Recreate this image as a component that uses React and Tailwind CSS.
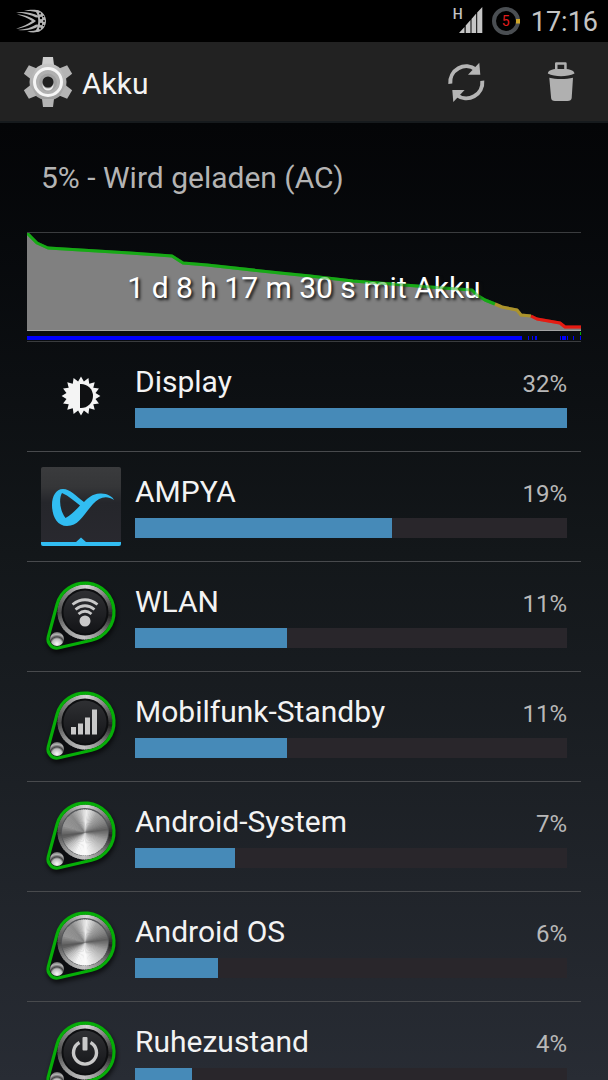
import { useId } from "react";

const GREEN = "#06ae08";
const LEVEL_GREEN = "0,0 4,4 10,10 21,15 70,18 103,20 145,23 156,30 180,32 253,40 283,43 326,48 403,54 445,57 450,62 458,67 468,71";
const LEVEL_YELLOW = "468,71 475,74 490,77 494,82 504,83";
const LEVEL_RED = "504,83 510,86 533,90 538,94 554,94";

const CHARGE_TICKS = [
  [0, 495],
  [501, 1],
  [505, 1],
  [508, 2],
  [533, 1],
  [535, 4],
  [540, 1],
  [546, 1],
  [553, 1],
];

// grey levels round a brushed metal disc, by angle in degrees (0 = top)
const SHEEN = [
  [0, 240],
  [30, 165],
  [60, 130],
  [80, 95],
  [110, 165],
  [140, 205],
  [175, 250],
  [200, 245],
  [230, 185],
  [258, 85],
  [285, 150],
  [320, 140],
  [345, 190],
  [360, 240],
];

const RING_SHEEN = [
  [0, 215],
  [45, 130],
  [95, 35],
  [135, 125],
  [180, 195],
  [225, 150],
  [265, 75],
  [310, 130],
  [360, 215],
];

function shadeAt(stops, deg) {
  const i = stops.findIndex(([a]) => a > deg);
  const [a0, v0] = stops[i - 1];
  const [a1, v1] = stops[i];
  return Math.round(v0 + ((v1 - v0) * (deg - a0)) / (a1 - a0));
}

function polar(cx, cy, r, deg) {
  const rad = ((deg - 90) * Math.PI) / 180;
  return `${(cx + r * Math.cos(rad)).toFixed(2)} ${(cy + r * Math.sin(rad)).toFixed(2)}`;
}

function MetalDisc({ cx, cy, r, stops }) {
  return Array.from({ length: 72 }, (_, i) => {
    const deg = i * 5;
    const v = shadeAt(stops, deg);
    return (
      <path
        key={deg}
        d={`M${cx} ${cy}L${polar(cx, cy, r, deg)}A${r} ${r} 0 0 1 ${polar(cx, cy, r, deg + 7)}Z`}
        fill={`rgb(${v},${v},${v})`}
      />
    );
  });
}

function Knob({ plain, children }) {
  const id = useId();
  const outline = "M16 27.4A29 29 0 1 1 50.5 63.3L18 70.8A9 9 0 0 1 7.3 59.7Z";
  return (
    <svg viewBox="0 0 80 80" className="h-20 w-20" aria-hidden="true">
      <defs>
        <radialGradient id={`${id}s`} cx="0.5" cy="0.85" r="0.9">
          <stop offset="0" stopColor="#f8f8f8" />
          <stop offset="0.4" stopColor="#bbb" />
          <stop offset="0.55" stopColor="#444" />
          <stop offset="0.75" stopColor="#b5b5b5" />
          <stop offset="1" stopColor="#555" />
        </radialGradient>
        <linearGradient id={`${id}f`} x1="0" y1="0" x2="0" y2="1">
          <stop offset="0" stopColor="#2f3033" />
          <stop offset="1" stopColor="#131417" />
        </linearGradient>
        <filter id={`${id}b`} x="-20%" y="-20%" width="140%" height="140%">
          <feGaussianBlur stdDeviation="2" />
        </filter>
      </defs>
      <path d={outline} transform="translate(1 3)" stroke="#000" strokeWidth="4" opacity="0.6" filter={`url(#${id}b)`} />
      <path d={outline} fill="#0c0d10" />
      <MetalDisc cx={44} cy={35} r={27.5} stops={RING_SHEEN} />
      {plain ? (
        <>
          <circle cx="44" cy="35" r="24" fill="#55575a" />
          <MetalDisc cx={44} cy={35.5} r={23} stops={SHEEN} />
        </>
      ) : (
        <>
          <circle cx="44" cy="35" r="23.5" fill="#0d0e10" />
          <circle cx="44" cy="35" r="21.5" fill={`url(#${id}f)`} />
        </>
      )}
      <circle cx="16" cy="62" r="7" fill={`url(#${id}s)`} />
      <path d={outline} fill="none" stroke={GREEN} strokeWidth="3.2" />
      {children}
    </svg>
  );
}

function WifiKnob() {
  return (
    <Knob>
      <g fill="none" stroke="#c9c9c9" strokeWidth="2.8">
        <path d="M31.5 27.5Q44 18 56.5 27.5" />
        <path d="M34.5 32.5Q44 25 53.5 32.5" />
        <path d="M37.5 37Q44 31.5 50.5 37" />
      </g>
      <circle cx="44" cy="44" r="5.5" fill="#c9c9c9" />
    </Knob>
  );
}

function SignalKnob() {
  return (
    <Knob>
      <g fill="#c9c9c9">
        <rect x="30" y="40" width="5" height="7.5" />
        <rect x="37" y="36.5" width="5" height="11" />
        <rect x="44" y="30.5" width="5" height="17" />
        <rect x="51" y="22.5" width="5" height="25" />
      </g>
    </Knob>
  );
}

function PowerKnob() {
  return (
    <Knob>
      <path d="M38.5 25.5A11.5 11.5 0 1 0 49.5 25.5" fill="none" stroke="#c9c9c9" strokeWidth="3.4" />
      <rect x="41.5" y="20" width="5" height="13.5" rx="1" fill="#c9c9c9" />
    </Knob>
  );
}

function DisplayIcon() {
  const teeth = Array.from({ length: 32 }, (_, i) => polar(40, 39, i % 2 ? 14.8 : 19.4, i * 11.25)).join("L");
  return (
    <svg viewBox="0 0 80 80" className="h-20 w-20" aria-hidden="true">
      <path d={`M${teeth}Z`} fill="#f4f4f4" />
      <path d="M39 27H40A12 12 0 0 1 40 51H39Z" fill="#0f1012" />
    </svg>
  );
}

function AmpyaIcon() {
  const id = useId();
  return (
    <svg viewBox="0 0 80 80" className="h-20 w-20" aria-hidden="true">
      <defs>
        <linearGradient id={id} x1="0" y1="0" x2="0" y2="1">
          <stop offset="0" stopColor="#3a3b3d" />
          <stop offset="0.25" stopColor="#353638" />
          <stop offset="0.45" stopColor="#25262b" />
          <stop offset="1" stopColor="#29292f" />
        </linearGradient>
      </defs>
      <rect width="80" height="79" rx="2" fill={`url(#${id})`} />
      <path
        fillRule="evenodd"
        fill="#31bdf2"
        d="M73 33C66 28 58 30 52 37C43 47 38 59 26 59C16 59 11 49 11 38C11 29 15 22 22 22C29 22 35 29 43 35C47 31 51 27 59 26.5C66 26 72 30 73 33ZM21 26C17.5 32 19 44 24.5 51C30 48 35 43 39 38.5C33 34 28 29 21 26Z"
      />
      <path d="M0 75H35L40 70.5L45 75H80V77Q80 79 78 79H2Q0 79 0 77Z" fill="#31bdf2" />
    </svg>
  );
}

const consumers = [
  { name: "Display", percent: 32, Icon: DisplayIcon },
  { name: "AMPYA", percent: 19, Icon: AmpyaIcon },
  { name: "WLAN", percent: 11, fill: 35.2, Icon: WifiKnob },
  { name: "Mobilfunk-Standby", percent: 11, fill: 35.2, Icon: SignalKnob },
  { name: "Android-System", percent: 7, fill: 23.1, Icon: () => <Knob plain /> },
  { name: "Android OS", percent: 6, fill: 19.2, Icon: () => <Knob plain /> },
  { name: "Ruhezustand", percent: 4, fill: 13.1, Icon: PowerKnob },
];

function StatusBar() {
  return (
    <div className="flex h-[42px] shrink-0 items-center bg-black pr-[10px] pl-[15px] text-[#c4c4c4]">
      <svg viewBox="0 0 32 26" className="h-[26px] w-8" aria-hidden="true">
        <g fill="#b5b5b5">
          <path d="M9 3C15 1.2 21 1.3 25 3L24 5C19 3 14 2.7 9 3Z" />
          <path d="M1 4.2C9 3.4 17 4.5 24 8L22 10C16 6.6 9 5 1 4.2Z" />
          <path d="M2 6.5C9 6.5 16 9 21 13C16 17 9 20 1 20.8C8 18.5 13 16 17 13C13 10 8 8 2 6.5Z" />
          <path d="M3 22C10 21.5 17 19.5 22 16L24 18C18 22 10 23 3 22Z" />
          <path d="M12 23.2C16 23.4 20 22.8 24 21L25 23C21 24.8 16 24.8 12 23.2Z" />
          <path d="M22 1.9C34 4.5 34 21.5 22 24.1L21 22C24 18 24 8 21 4Z" />
        </g>
        <g fill="#000">
          <circle cx="25" cy="5.5" r="1" />
          <circle cx="21.5" cy="10.5" r="1.1" />
          <circle cx="26" cy="10" r="1.2" />
          <circle cx="29" cy="13" r="0.9" />
          <circle cx="26" cy="16" r="1.2" />
          <circle cx="21.5" cy="15.5" r="1.1" />
          <circle cx="25" cy="20.5" r="1" />
          <circle cx="28.5" cy="8.5" r="0.8" />
          <circle cx="28.5" cy="17.5" r="0.8" />
        </g>
      </svg>
      <div className="ml-auto flex items-center">
        <span className="-mr-1 self-start pt-0.5 text-sm leading-4 font-medium">H</span>
        <svg viewBox="0 0 24 28" className="h-7 w-6" aria-hidden="true">
          <path fill="#c6c6c6" d="M0 26L5.5 20V26ZM6.7 18.5L11.5 13V26H6.7ZM12.5 12L17.2 6.5V26H12.5ZM18.2 5.5L23.3 0V26H18.2Z" />
        </svg>
        <div className="relative ml-2 grid h-[30px] w-[30px] place-items-center">
          <svg viewBox="0 0 30 30" className="absolute inset-0" aria-hidden="true">
            <circle cx="15" cy="15" r="12" fill="none" stroke="#4a4e52" strokeWidth="4" />
            <rect x="25" y="13" width="4" height="4.5" fill="#cfa628" />
          </svg>
          <span className="relative text-sm leading-4 text-[#e01c1c]">5</span>
        </div>
        <time className="ml-[10px] pt-0.5 text-[27px] leading-8">17:16</time>
      </div>
    </div>
  );
}

function ActionBar() {
  const tooth = "M-5 -25H5L6 -17H-6Z";
  return (
    <header className="flex h-[81px] shrink-0 items-center border-b-2 border-[#161a1d] bg-[#222]">
      <svg viewBox="-26 -26 52 52" className="ml-[22px] h-[52px] w-[52px]" aria-hidden="true">
        <defs>
          <linearGradient id="gear" gradientUnits="userSpaceOnUse" x1="0" y1="-25" x2="0" y2="25">
            <stop offset="0" stopColor="#cdcdcd" />
            <stop offset="1" stopColor="#969696" />
          </linearGradient>
        </defs>
        <path d={tooth} fill="#cdcdcd" />
        <circle r="18.5" fill="url(#gear)" />
        <g fill="#b4b4b4">
          {[60, 120, 180, 240, 300].map((deg) => (
            <path key={deg} d={tooth} transform={`rotate(${deg})`} />
          ))}
        </g>
        <circle r="13.5" fill="#b0b0b0" stroke="#f5f5f5" strokeWidth="3" />
        <circle r="9" cy="0.5" fill="#a2a2a2" />
        <path d="M-5.5 1A5.5 5.5 0 0 0 5.5 1V3A5.5 5.5 0 0 1 -5.5 3Z" fill="#eee" />
        <circle r="5.5" fill="#202020" />
      </svg>
      <h1 className="ml-2 pt-1 text-[30px] leading-9 text-[#f3f3f3]">Akku</h1>
      <button type="button" aria-label="Aktualisieren" className="ml-auto flex h-full w-[95px] items-center justify-center">
        <svg viewBox="0 0 40 44" className="h-11 w-10" aria-hidden="true">
          {[0, 180].map((deg) => (
            <g key={deg} transform={`rotate(${deg} 20.3 22.3)`}>
              <path d="M4.3 23.8A16 16 0 0 1 30 9.6" fill="none" stroke="#b5b5b5" strokeWidth="4" />
              <path d="M33.3 2.7L34.3 14.7H22Z" fill="#b5b5b5" />
            </g>
          ))}
        </svg>
      </button>
      <button type="button" aria-label="Löschen" className="flex h-full w-[95px] items-center justify-center">
        <svg viewBox="0 0 28 44" className="h-11 w-7" aria-hidden="true">
          <g fill="#b0b0b0">
            <path fillRule="evenodd" d="M8 10V3.5Q8 2.3 9.2 2.3H18.5Q19.7 2.3 19.7 3.5V10ZM10.5 9H17.2V4.8H10.5Z" />
            <path d="M.8 13.5C1 10.5 5 9 10 9H18C23 9 27 10.5 27.5 13.5C20 17 8 17 .8 13.5Z" />
            <path d="M2.3 17.8C9 19.5 19 19.5 26 17.8L24.7 38C24.5 40 23 41 20.5 41H8C5.5 41 4.3 40 4.1 38Z" />
          </g>
        </svg>
      </button>
    </header>
  );
}

function LevelLine() {
  return (
    <g fill="none" strokeWidth="3" strokeLinejoin="round">
      <polyline points={LEVEL_GREEN} stroke="#17a916" />
      <polyline points={LEVEL_YELLOW} stroke="#ab932c" />
      <polyline points={LEVEL_RED} stroke="#e51b12" />
    </g>
  );
}

function HistoryChart() {
  return (
    <div className="relative h-[110px] border-y border-[#3a3c3f]">
      <svg viewBox="0 0 554 108" preserveAspectRatio="none" className="absolute inset-0 h-full w-full" aria-hidden="true">
        <polygon points={`${LEVEL_GREEN} ${LEVEL_YELLOW} ${LEVEL_RED} 554,97 0,97`} fill="#808080" />
        <rect y="97" width="554" height="1" fill="#a5a5a5" />
        {CHARGE_TICKS.map(([x, width]) => (
          <rect key={x} x={x} y="103" width={width} height="4" fill="#0000fe" />
        ))}
        <rect x="553" y="99" width="1" height="3" fill={GREEN} />
        <LevelLine />
      </svg>
      <p className="absolute inset-x-0 top-[37px] text-center text-[30px] leading-9 text-white [text-shadow:2px_2px_3px_#111]">
        1 d 8 h 17 m 30 s mit Akku
      </p>
      {/* the level line shines through the label */}
      <svg viewBox="0 0 554 108" preserveAspectRatio="none" className="absolute inset-0 h-full w-full opacity-50" aria-hidden="true">
        <LevelLine />
      </svg>
    </div>
  );
}

function ConsumerRow({ name, percent, fill, Icon }) {
  const width = fill ?? (percent / consumers[0].percent) * 100;
  return (
    <li className="flex h-[110px] shrink-0 items-start gap-[14px] border-b border-[#484a4d] px-[14px] pt-[15px]">
      <Icon />
      <div className="flex-1 pt-[7px]">
        <div className="flex items-baseline justify-between">
          <span className="text-[30px] leading-9 text-[#f3f3f3]">{name}</span>
          <span className="text-2xl leading-9 text-[#b8b8b8]">{percent}%</span>
        </div>
        <div className="mt-[6px] h-5 bg-[#29262b]">
          <div className="h-full bg-[#468ab8]" style={{ width: `${width}%` }} />
        </div>
      </div>
    </li>
  );
}

export default function App() {
  return (
    <div className="flex h-screen flex-col overflow-hidden bg-black font-[Roboto,sans-serif]">
      <StatusBar />
      <ActionBar />
      <main className="min-h-0 flex-1 overflow-hidden bg-linear-to-b from-[#040507] via-[#13171a] via-45% to-[#282c34] px-[27px]">
        <p className="px-[14px] pt-[37px] pb-9 text-[30px] leading-9 text-[#b4b4b4]">5% - Wird geladen (AC)</p>
        <HistoryChart />
        <ul className="flex flex-col">
          {consumers.map((item) => (
            <ConsumerRow key={item.name} {...item} />
          ))}
        </ul>
      </main>
    </div>
  );
}
